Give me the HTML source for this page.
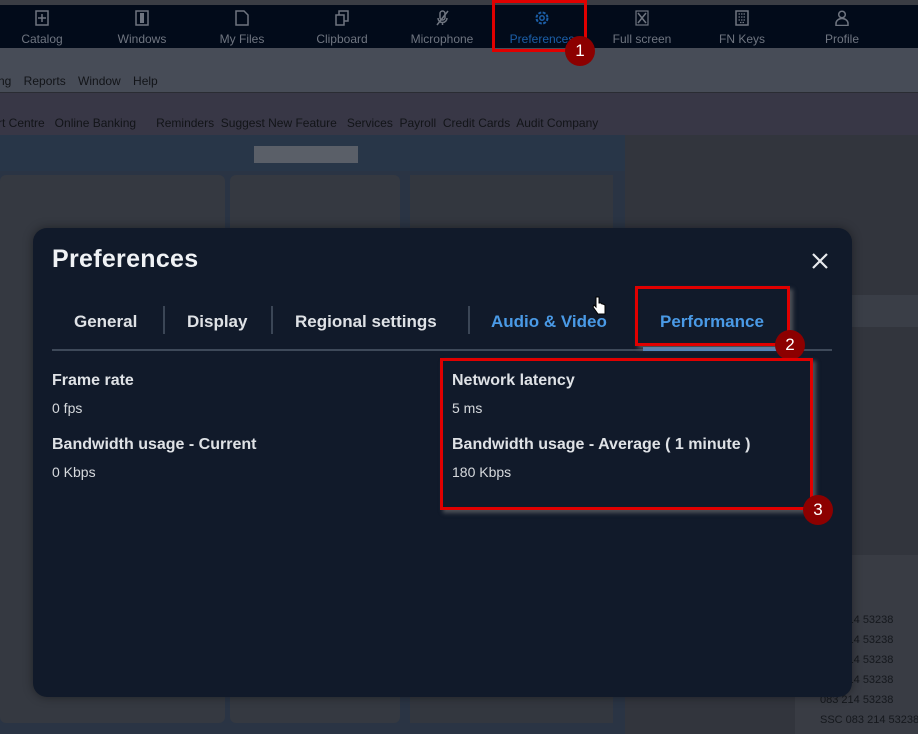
<!DOCTYPE html>
<html><head><meta charset="utf-8"><style>
*{margin:0;padding:0;box-sizing:border-box}
body{width:918px;height:734px;overflow:hidden;background:#30343d;font-family:"Liberation Sans",sans-serif;position:relative}
.abs{position:absolute}
.top{left:0;top:0;width:918px;height:5px;background:#3a3d44}
.nav{left:0;top:5px;width:918px;height:43px;background:#020b1a}
.nav .it{position:absolute;top:0;width:100px;text-align:center;color:#6f7580;font-size:12px}
.nav .it .ic{height:22px;display:flex;align-items:center;justify-content:center;padding-top:4px}
.nav .it .lb{margin-top:5px}
.menu{left:0;top:48px;width:918px;height:44px;background:#474c57;color:#121418;font-size:12px}
.tool{left:0;top:92px;width:918px;height:43px;background:#383746;border-top:1px solid #2a2c33;color:#121418;font-size:12px}
.win{left:0;top:135px;width:625px;height:599px;background:#2a3444}
.pane{background:#353941;border-radius:6px}
.right{left:625px;top:135px;width:293px;height:599px;background:#32353d}
.dlg{left:33px;top:228px;width:819px;height:469px;background:#111a2a;border-radius:14px;box-shadow:0 0 10px rgba(0,0,0,.4)}
.h1{left:19px;top:17px;font-size:25px;font-weight:bold;color:#f0f2f5;letter-spacing:.3px}
.tab{top:84px;font-size:17px;font-weight:bold;color:#dfe2e6}
.sep{top:78px;width:2px;height:28px;background:#3b4656}
.lbl{font-size:16px;font-weight:bold;color:#dfe2e6}
.val{font-size:14px;color:#d6d9dd}
.red{border:3px solid #e00000;box-shadow:3px 3px 4px rgba(120,120,120,.6)}
.badge{width:30px;height:30px;border-radius:50%;background:#8c0000;color:#fff;font-size:17px;text-align:center;line-height:30px}
</style></head><body>
<div class="abs top"></div>
<div class="abs nav">
<div class="it" style="left:-8px"><div class="ic"><svg width="14" height="16"><rect x="1" y="1" width="12" height="14" fill="none" stroke="#6f7580" stroke-width="1.5"/><path d="M7 4v8M3 8h8" stroke="#6f7580" stroke-width="1.5"/></svg></div><div class="lb">Catalog</div></div>
<div class="it" style="left:92px"><div class="ic"><svg width="14" height="16"><rect x="1" y="1" width="12" height="14" fill="none" stroke="#6f7580" stroke-width="1.5"/><rect x="5" y="3" width="4" height="10" fill="#6f7580"/></svg></div><div class="lb">Windows</div></div>
<div class="it" style="left:192px"><div class="ic"><svg width="14" height="16"><path d="M1 1h8l4 4v10H1z" fill="none" stroke="#6f7580" stroke-width="1.5"/></svg></div><div class="lb">My Files</div></div>
<div class="it" style="left:292px"><div class="ic"><svg width="14" height="16"><rect x="1" y="5" width="8" height="10" fill="none" stroke="#6f7580" stroke-width="1.5"/><path d="M4 5V1h9v10h-4" fill="none" stroke="#6f7580" stroke-width="1.5"/></svg></div><div class="lb">Clipboard</div></div>
<div class="it" style="left:392px"><div class="ic"><svg width="14" height="16"><rect x="5" y="1" width="5" height="9" rx="2.5" fill="none" stroke="#6f7580" stroke-width="1.5"/><path d="M3 8a4.5 4.5 0 009 0M7.5 13v2M2 15L13 1" stroke="#6f7580" stroke-width="1.5" fill="none"/></svg></div><div class="lb">Microphone</div></div>
<div class="it" style="left:492px;color:#1c5fa8"><div class="ic"><svg width="16" height="16"><circle cx="8" cy="8" r="5.5" fill="none" stroke="#1c5fa8" stroke-width="2" stroke-dasharray="3 1.4"/><circle cx="8" cy="8" r="2.2" fill="none" stroke="#1c5fa8" stroke-width="1.5"/></svg></div><div class="lb">Preferences</div></div>
<div class="it" style="left:592px"><div class="ic"><svg width="14" height="16"><rect x="1" y="1" width="12" height="14" fill="none" stroke="#6f7580" stroke-width="1.2"/><path d="M3 3l8 10M11 3l-8 10" stroke="#6f7580" stroke-width="1.5"/></svg></div><div class="lb">Full screen</div></div>
<div class="it" style="left:692px"><div class="ic"><svg width="14" height="16"><rect x="1" y="1" width="12" height="14" fill="none" stroke="#6f7580" stroke-width="1.5"/><path d="M3.5 4h7M3.5 7h7M3.5 10h7M5 12.5h4" stroke="#6f7580" stroke-width="1.2" stroke-dasharray="1.5 1"/></svg></div><div class="lb">FN Keys</div></div>
<div class="it" style="left:792px"><div class="ic"><svg width="14" height="16"><circle cx="7" cy="4.5" r="3.3" fill="none" stroke="#6f7580" stroke-width="1.5"/><path d="M1 15.5v-2a6 5 0 0112 0v2z" fill="none" stroke="#6f7580" stroke-width="1.5"/></svg></div><div class="lb">Profile</div></div>
</div>
<div class="abs menu"><div style="position:absolute;top:26px;left:-2px;word-spacing:9px">ng Reports Window Help</div></div>
<div class="abs tool">
<div style="position:absolute;top:23px;left:-2px;white-space:pre">rt Centre   Online Banking      Reminders  Suggest New Feature   Services  Payroll  Credit Cards  Audit Company</div>
</div>
<div class="abs win">
<div class="abs" style="left:0;top:0;width:625px;height:36px;background:#283648"></div>
<div class="abs" style="left:254px;top:11px;width:104px;height:17px;background:#5a5f68"></div>
<div class="abs pane" style="left:0;top:40px;width:225px;height:548px"></div>
<div class="abs pane" style="left:230px;top:40px;width:170px;height:548px"></div>
<div class="abs" style="left:410px;top:40px;width:203px;height:548px;background:#33373f"></div>
</div>
<div class="abs right">
<div class="abs" style="left:227px;top:160px;width:66px;height:32px;background:#3a3e47"></div>
<div class="abs" style="left:170px;top:420px;width:123px;height:179px;background:#393c44"></div>
</div>
<div class="abs" style="left:820px;top:590px;font-size:11px;color:#15181d;line-height:20px;white-space:pre">unt
083 214 53238
083 214 53238
083 214 53238
083 214 53238
083 214 53238
SSC 083 214 53238</div>
<div class="abs dlg">
<div class="abs h1">Preferences</div>
<svg class="abs" style="left:778px;top:24px" width="18" height="18"><path d="M2 2l14 14M16 2L2 16" stroke="#e8eaed" stroke-width="2.2"/></svg>
<div class="abs tab" style="left:41px">General</div>
<div class="abs sep" style="left:130px"></div>
<div class="abs tab" style="left:154px">Display</div>
<div class="abs sep" style="left:238px"></div>
<div class="abs tab" style="left:262px">Regional settings</div>
<div class="abs sep" style="left:435px"></div>
<div class="abs tab" style="left:458px;color:#4a9ae6">Audio &amp; Video</div>
<div class="abs tab" style="left:627px;color:#4a9ae6">Performance</div>
<div class="abs" style="left:19px;top:121px;width:780px;height:2px;background:#3e4959"></div>
<div class="abs" style="left:610px;top:119px;width:135px;height:4px;background:#4f86c5"></div>
<div class="abs lbl" style="left:19px;top:144px">Frame rate</div>
<div class="abs val" style="left:19px;top:172px">0 fps</div>
<div class="abs lbl" style="left:19px;top:208px">Bandwidth usage - Current</div>
<div class="abs val" style="left:19px;top:236px">0 Kbps</div>
<div class="abs lbl" style="left:419px;top:144px">Network latency</div>
<div class="abs val" style="left:419px;top:172px">5 ms</div>
<div class="abs lbl" style="left:419px;top:208px">Bandwidth usage - Average ( 1 minute )</div>
<div class="abs val" style="left:419px;top:236px">180 Kbps</div>
</div>
<div class="abs red" style="left:492px;top:0;width:95px;height:52px;box-shadow:none"></div>
<div class="abs badge" style="left:565px;top:36px">1</div>
<div class="abs red" style="left:635px;top:286px;width:155px;height:60px"></div>
<div class="abs badge" style="left:775px;top:330px">2</div>
<div class="abs red" style="left:440px;top:358px;width:373px;height:152px"></div>
<div class="abs badge" style="left:803px;top:495px">3</div>
<svg class="abs" style="left:592px;top:296px" width="14" height="20"><path d="M4 1v10l-2-2-1 2 5 7h7V9l-2-1-1 0-1-1-2 0V1z" fill="#fff" stroke="#000"/></svg>
</body></html>
